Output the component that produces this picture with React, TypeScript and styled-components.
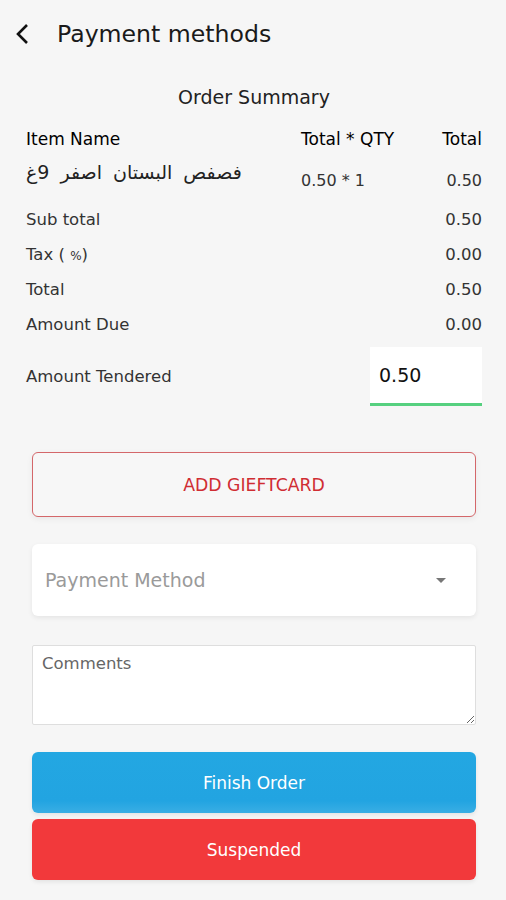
import React from 'react';
import styled, { createGlobalStyle } from 'styled-components';

interface SummaryLine {
  label: string;
  unit?: string;
  value: string;
}

const lines: SummaryLine[] = [
  { label: 'Sub total', value: '0.50' },
  { label: 'Tax ( ', unit: '%', value: '0.00' },
  { label: 'Total', value: '0.50' },
  { label: 'Amount Due', value: '0.00' },
];

function App() {
  return (
    <Page>
      <GlobalStyle />
      <TopBar>
        <BackButton aria-label="back">
          <svg width="14" height="22" viewBox="0 0 14 22" fill="none">
            <polyline points="12,2 3,11 12,20" stroke="#111" strokeWidth="2.6" strokeLinejoin="miter" />
          </svg>
        </BackButton>
        <Title>Payment methods</Title>
      </TopBar>

      <Content>
        <SectionTitle>Order Summary</SectionTitle>

        <ItemGrid>
          <HeadCell>Item Name</HeadCell>
          <HeadCell>Total * QTY</HeadCell>
          <HeadCell $right>Total</HeadCell>
          <ItemName>فصفص البستان اصفر 9غ</ItemName>
          <ItemCell>0.50 * 1</ItemCell>
          <ItemCell $right>0.50</ItemCell>
        </ItemGrid>

        <SummaryList>
          {lines.map(line => (
            <SummaryRow key={line.label}>
              <span>
                {line.label}
                {line.unit && (
                  <>
                    <Small>{line.unit}</Small>)
                  </>
                )}
              </span>
              <span>{line.value}</span>
            </SummaryRow>
          ))}
        </SummaryList>

        <TenderRow>
          <span>Amount Tendered</span>
          <TenderInput defaultValue="0.50" />
        </TenderRow>
      </Content>

      <Actions>
        <OutlineButton>ADD GIEFTCARD</OutlineButton>
        <SelectBox>
          <Placeholder>Payment Method</Placeholder>
          <Caret />
        </SelectBox>
        <Comments placeholder="Comments" />
        <ButtonStack>
          <SolidButton $color="blue">Finish Order</SolidButton>
          <SolidButton $color="red">Suspended</SolidButton>
        </ButtonStack>
      </Actions>
    </Page>
  );
}

export default App;

const GlobalStyle = createGlobalStyle`
  html, body {
    margin: 0;
    padding: 0;
    background: #f6f6f6;
  }
  body {
    font-family: 'DejaVu Sans', 'Liberation Sans', sans-serif;
    color: #222;
  }
`;

const Page = styled.div`
  width: 506px;
  height: 900px;
  display: flex;
  flex-direction: column;
  background: #f6f6f6;
  overflow: hidden;
`;

const TopBar = styled.header`
  height: 68px;
  display: flex;
  align-items: center;
  gap: 27px;
  padding-left: 15px;
`;

const BackButton = styled.div`
  display: flex;
  align-items: center;
  width: 15px;
  height: 22px;
`;

const Title = styled.h1`
  margin: 0;
  font-size: 23.6px;
  font-weight: 400;
  color: #1a1a1a;
`;

const Content = styled.section`
  display: flex;
  flex-direction: column;
  padding: 0 24px 0 26px;
`;

const SectionTitle = styled.h2`
  margin: 16px 0 0;
  text-align: center;
  font-size: 19px;
  font-weight: 400;
  line-height: 26px;
  color: #222;
`;

const ItemGrid = styled.div`
  display: grid;
  grid-template-columns: 275px 1fr auto;
  margin-top: 15px;
`;

const HeadCell = styled.span<{ $right?: boolean }>`
  font-size: 17px;
  line-height: 28px;
  color: #000;
  text-align: ${p => (p.$right ? 'right' : 'left')};
`;

const ItemName = styled.span`
  font-size: 19px;
  word-spacing: 5px;
  line-height: 30px;
  color: #222;
  padding-top: 4px;
  text-align: left;
  white-space: nowrap;
`;

const ItemCell = styled.span<{ $right?: boolean }>`
  font-size: 16px;
  line-height: 30px;
  color: #333;
  padding-top: 13px;
  text-align: ${p => (p.$right ? 'right' : 'left')};
`;

const SummaryList = styled.div`
  display: flex;
  flex-direction: column;
  margin-top: 6px;
`;

const SummaryRow = styled.div`
  display: flex;
  justify-content: space-between;
  font-size: 16.5px;
  line-height: 35px;
  height: 35px;
  color: #333;
`;

const Small = styled.span`
  font-size: 12px;
  line-height: 0;
`;

const TenderRow = styled.div`
  display: flex;
  justify-content: space-between;
  align-items: center;
  margin-top: 5px;
  font-size: 16.5px;
  color: #333;
`;

const TenderInput = styled.input`
  width: 112px;
  height: 59px;
  box-sizing: border-box;
  border: none;
  border-bottom: 3px solid #56d07f;
  background: #fff;
  padding: 0 9px 0 9px;
  font-family: inherit;
  font-size: 19px;
  color: #111;
  outline: none;
`;

const Actions = styled.div`
  display: flex;
  flex-direction: column;
  gap: 27px;
  padding: 46px 30px 0 32px;
`;

const OutlineButton = styled.button`
  height: 65px;
  border: 1.5px solid #d4676a;
  border-radius: 6px;
  background: #f7f7f7;
  box-shadow: 0 2px 6px rgba(0, 0, 0, 0.06);
  font-family: inherit;
  font-size: 17.3px;
  color: #d02d33;
`;

const SelectBox = styled.div`
  height: 72px;
  display: flex;
  align-items: center;
  justify-content: space-between;
  padding: 0 30px 0 13px;
  background: #fff;
  border-radius: 6px;
  box-shadow: 0 2px 5px rgba(0, 0, 0, 0.07);
`;

const Placeholder = styled.span`
  font-size: 19px;
  color: #9a9a9a;
`;

const Caret = styled.span`
  width: 0;
  height: 0;
  border-left: 5px solid transparent;
  border-right: 5px solid transparent;
  border-top: 5px solid #777;
`;

const Comments = styled.textarea`
  height: 80px;
  box-sizing: border-box;
  margin-top: 2px;
  padding: 8px 9px;
  border: 1px solid #dedede;
  border-radius: 2px;
  background: #fff;
  font-family: inherit;
  font-size: 16.5px;
  color: #333;
  resize: vertical;
  outline: none;
  &::placeholder {
    color: #666;
  }
`;

const ButtonStack = styled.div`
  display: flex;
  flex-direction: column;
  gap: 6px;
`;

const SolidButton = styled.button<{ $color: 'blue' | 'red' }>`
  height: 61px;
  border: none;
  border-radius: 6px;
  background: ${p =>
    p.$color === 'blue'
      ? 'linear-gradient(180deg, #23a7e2 0%, #22a4e1 80%, #3aaee4 100%)'
      : '#f2393b'};
  box-shadow: 0 2px 4px rgba(0, 0, 0, 0.08);
  font-family: inherit;
  font-size: 17px;
  color: #fff;
`;
